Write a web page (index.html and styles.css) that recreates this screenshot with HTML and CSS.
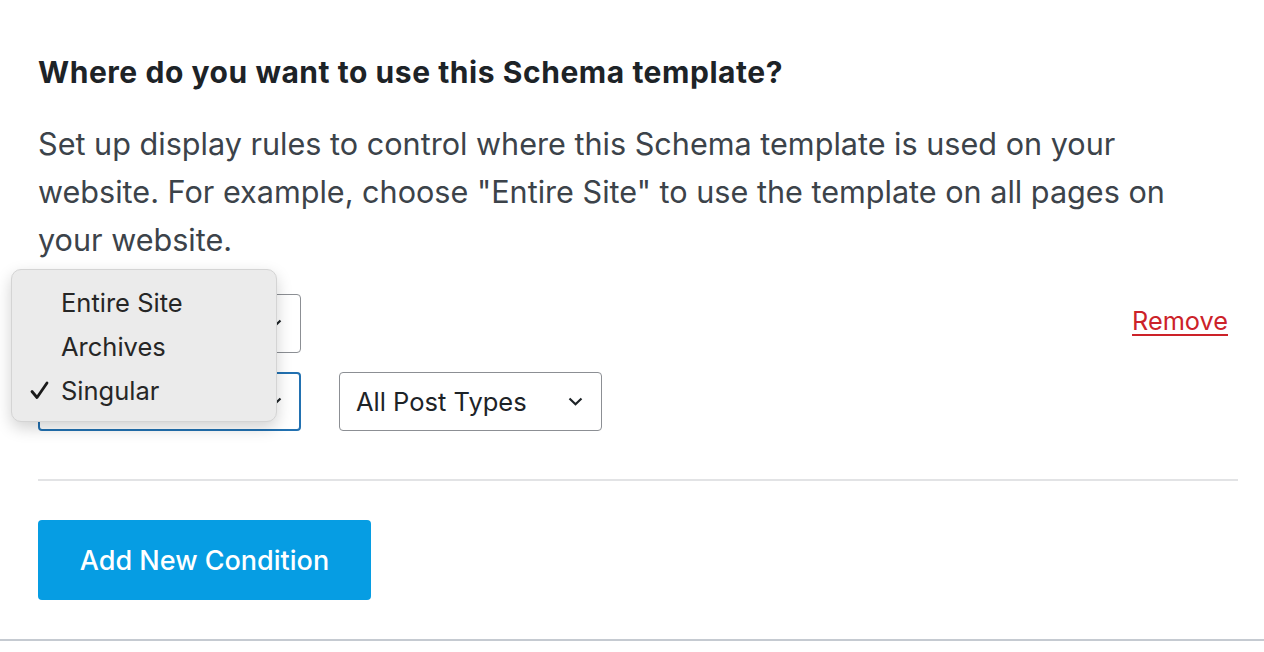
FILE: index.html
```html
<!DOCTYPE html>
<html>
<head>
<meta charset="utf-8">
<link rel="stylesheet" href="styles.css">
</head>
<body>
<div class="panel">
  <h2 class="title">Where do you want to use this Schema template?</h2>
  <p class="desc">Set up display rules to control where this Schema template is used on your website. For example, choose "Entire Site" to use the template on all pages on your website.</p>
  <div class="conditions">
    <div class="row">
      <div class="select">
        <span class="label">Include</span>
        <svg class="chev" width="15" height="9" viewBox="0 0 15 9"><path d="M1.5 1.5 L7.5 7.2 L13.5 1.5" fill="none" stroke="#1d2327" stroke-width="2.2"/></svg>
      </div>
      <a class="remove" href="#">Remove</a>
    </div>
    <div class="row">
      <div class="select focused">
        <span class="label">Singular</span>
        <svg class="chev" width="15" height="9" viewBox="0 0 15 9"><path d="M1.5 1.5 L7.5 7.2 L13.5 1.5" fill="none" stroke="#1d2327" stroke-width="2.2"/></svg>
      </div>
      <div class="select">
        <span class="label">All Post Types</span>
        <svg class="chev" width="15" height="9" viewBox="0 0 15 9"><path d="M1.5 1.5 L7.5 7.2 L13.5 1.5" fill="none" stroke="#1d2327" stroke-width="2.2"/></svg>
      </div>
    </div>
    <div class="popup">
      <div class="opt"><span class="check"></span>Entire Site</div>
      <div class="opt"><span class="check"></span>Archives</div>
      <div class="opt"><span class="check"><svg width="19" height="19" viewBox="0 0 19 19"><path d="M2 10.5 L7 16.5 L17 2" fill="none" stroke="#1a1a1a" stroke-width="2.8" stroke-linecap="round" stroke-linejoin="round"/></svg></span>Singular</div>
    </div>
  </div>
  <div class="divider"></div>
  <button class="add">Add New Condition</button>
</div>
<div class="footer"></div>
</body>
</html>
```
FILE: styles.css
```css
html, body {
  margin: 0;
  padding: 0;
  background: #ffffff;
  font-family: Inter, "Noto Sans", sans-serif;
}
.panel {
  padding: 54px 26px 39px 38px;
  border-bottom: 2px solid #c5cad1;
}
.title {
  margin: 0;
  font-size: 30px;
  line-height: 36px;
  font-weight: 700;
  letter-spacing: 0.55px;
  color: #1d2327;
}
.desc {
  margin: 30px 0 0;
  font-size: 30.6px;
  line-height: 48px;
  color: #3c434a;
  max-width: 1150px;
}
.conditions {
  position: relative;
  margin-top: 30px;
  display: flex;
  flex-direction: column;
  gap: 19px;
}
.row {
  display: flex;
  align-items: center;
  gap: 38px;
}
.select {
  box-sizing: border-box;
  width: 263px;
  height: 59px;
  border: 1px solid #8c8f94;
  border-radius: 4px;
  display: flex;
  align-items: center;
  justify-content: space-between;
  padding: 0 18px 0 16px;
  font-size: 25.5px;
  color: #1d2327;
  background: #fff;
}
.select.focused {
  border: 2px solid #2271b1;
  padding: 0 17px 0 15px;
}
.remove {
  margin-left: auto;
  margin-right: 10px;
  margin-bottom: 6px;
  font-size: 25.3px;
  color: #cc2229;
  text-decoration: underline;
  text-underline-offset: 4px;
}
.popup {
  position: absolute;
  left: -27px;
  top: -25px;
  width: 266px;
  height: 153px;
  box-sizing: border-box;
  background: #ebebeb;
  border: 1px solid #d4d4d4;
  border-radius: 10px;
  box-shadow: 0 6px 16px rgba(0,0,0,0.18);
  padding: 10px 0 0 18px;
}
.opt {
  height: 44px;
  display: flex;
  align-items: center;
  font-size: 25.5px;
  color: #262626;
}
.check {
  width: 31px;
  display: flex;
  align-items: center;
}
.divider {
  margin-top: 48px;
  height: 2px;
  background: #e2e3e5;
}
.add {
  display: block;
  margin-top: 39px;
  width: 333px;
  height: 80px;
  border: none;
  border-radius: 4px;
  background: #069de3;
  color: #fff;
  font-family: Inter, "Noto Sans", sans-serif;
  font-size: 27px;
  font-weight: 500;
}
.footer {
  height: 20px;
  background: #fff;
}
```
